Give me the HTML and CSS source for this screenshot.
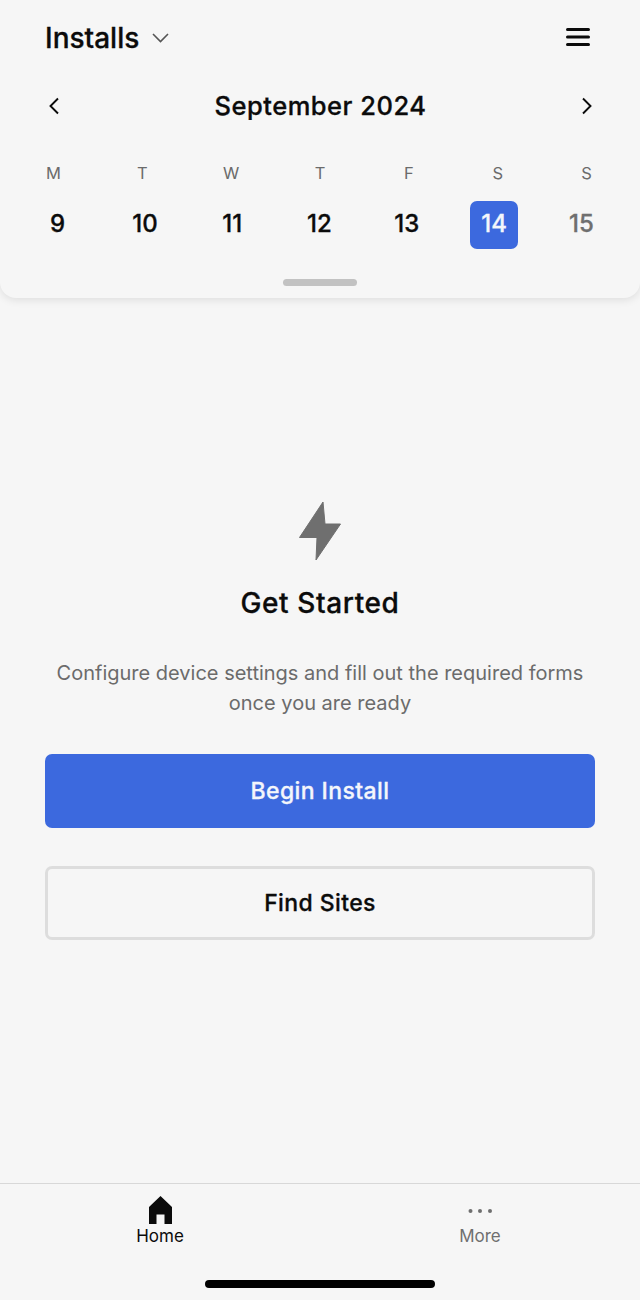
FILE: index.html
```html
<!DOCTYPE html>
<html lang="en">
<head>
<meta charset="utf-8">
<title>Installs</title>
<link rel="stylesheet" href="styles.css">
</head>
<body>
<div class="app">
  <header class="sheet">
    <div class="topbar">
      <div class="title-wrap">
        <span class="title strong">Installs</span>
        <svg class="chev" width="17" height="10" viewBox="0 0 17 10"><path d="M1 1 8.500 8.500 16 1" fill="none" stroke="#555" stroke-width="1.6"/></svg>
      </div>
      <svg class="burger" width="24" height="18" viewBox="0 0 24 18"><path d="M1.500 1.500h21M1.500 9h21M1.500 16.500h21" fill="none" stroke="#0b0b0b" stroke-width="3" stroke-linecap="round"/></svg>
    </div>
    <div class="month">
      <svg width="12" height="18" viewBox="0 0 12 18"><path d="M10 1.500 2.500 9l7.500 7.500" fill="none" stroke="#0b0b0b" stroke-width="1.900"/></svg>
      <span class="month-name strong">September 2024</span>
      <svg width="12" height="18" viewBox="0 0 12 18"><path d="M2 1.500 9.500 9 2 16.500" fill="none" stroke="#0b0b0b" stroke-width="1.900"/></svg>
    </div>
    <div class="weekdays">
      <span>M</span><span>T</span><span>W</span><span>T</span><span>F</span><span>S</span><span>S</span>
    </div>
    <div class="dates strong">
      <span class="date">9</span><span class="date">10</span><span class="date">11</span><span class="date">12</span><span class="date">13</span><span class="date selected">14</span><span class="date muted">15</span>
    </div>
    <div class="handle"></div>
  </header>

  <main class="content">
    <svg class="bolt" width="44" height="60" viewBox="0 0 44 60"><path d="M25 1 1.500 36.500H19L18 59 42.500 23H27L25 1Z" fill="#6f6f6f" stroke="#6f6f6f" stroke-width="1" stroke-linejoin="round"/></svg>
    <h1 class="heading strong">Get Started</h1>
    <p class="desc">Configure device settings and fill out the required forms<br>once you are ready</p>
    <button class="btn primary strong">Begin Install</button>
    <button class="btn secondary strong">Find Sites</button>
  </main>

  <nav class="tabs">
    <div class="tab active">
      <svg width="26" height="28" viewBox="0 0 26 28"><path d="M13.500 0 25 11V28H17.500V18.500H9.500V28H2V11L13.500 0Z" fill="#0b0b0b"/></svg>
      <span>Home</span>
    </div>
    <div class="tab">
      <svg width="26" height="28" viewBox="0 0 26 28"><circle cx="3.500" cy="15" r="2" fill="#6f6f6f"/><circle cx="13" cy="15" r="2" fill="#6f6f6f"/><circle cx="23" cy="15" r="2" fill="#6f6f6f"/></svg>
      <span>More</span>
    </div>
    <div class="home-bar"></div>
  </nav>
</div>
</body>
</html>
```
FILE: styles.css
```css
* { box-sizing: border-box; }
html, body { margin: 0; padding: 0; }
body {
  font-family: Inter, "Liberation Sans", sans-serif;
  background: #f6f6f6;
  color: #0b0b0b;
}
.strong { -webkit-text-stroke: 0.3px currentColor; }
.app {
  width: 640px;
  height: 1300px;
  display: flex;
  flex-direction: column;
  overflow: hidden;
}
.sheet {
  height: 298px;
  flex: none;
  background: #f6f6f6;
  border-radius: 0 0 16px 16px;
  box-shadow: 0 2px 8px rgba(0, 0, 0, 0.10);
  display: flex;
  flex-direction: column;
  padding-top: 19px;
}
.topbar {
  height: 36px;
  padding: 0 50px 0 45px;
  display: flex;
  align-items: center;
  justify-content: space-between;
}
.title-wrap { display: flex; align-items: center; gap: 13px; }
.title { padding-top: 2px; font-size: 28px; font-weight: 500; letter-spacing: 0; }
.chev { margin-top: 2px; }
.month {
  margin-top: 33px;
  height: 36px;
  padding: 0 47px 0 48px;
  display: flex;
  align-items: center;
  justify-content: space-between;
}
.month-name { padding-bottom: 2px; font-size: 25.500px; font-weight: 500; letter-spacing: 0.5px; }
.weekdays {
  margin-top: 39px;
  padding: 0 9px;
  display: grid;
  grid-template-columns: repeat(7, 1fr);
  height: 20px;
  line-height: 20px;
  font-size: 16.500px;
  color: #6b6b6b;
  text-align: center;
}
.dates {
  margin-top: 18px;
  padding: 0 15px 0 14px;
  display: grid;
  grid-template-columns: repeat(7, 1fr);
  justify-items: center;
  font-size: 24px;
  font-weight: 500;
}
.date {
  width: 48px;
  height: 48px;
  padding-bottom: 3px;
  display: flex;
  align-items: center;
  justify-content: center;
}
.selected { background: #3c69de; color: #f4f6fb; border-radius: 7px; }
.muted { color: #6f6f6f; }
.handle {
  width: 74px;
  height: 7px;
  margin: 30px auto 0;
  border-radius: 4px;
  background: #c2c2c2;
}
.content {
  flex: 1;
  padding: 203px 45px 0;
  display: flex;
  flex-direction: column;
  align-items: center;
}
.heading { margin: 23px 0 0; font-size: 28px; line-height: 38px; font-weight: 500; letter-spacing: 0.6px; }
.desc {
  margin: 36px 0 0;
  font-size: 20px;
  line-height: 30px;
  color: #6b6b6b;
  text-align: center;
  white-space: nowrap;
}
.btn {
  width: 100%;
  height: 74px;
  font: 500 23px Inter, "Liberation Sans", sans-serif;
  letter-spacing: 0.4px;
  border-radius: 7px;
  flex: none;
}
.primary {
  margin-top: 36px;
  background: #3c69de;
  color: #f4f6fb;
  border: 0;
}
.secondary {
  margin-top: 38px;
  background: transparent;
  color: #0b0b0b;
  border: 3px solid #dddddd;
}
.tabs {
  height: 117px;
  flex: none;
  border-top: 1px solid #d8d8d8;
  position: relative;
  display: grid;
  grid-template-columns: 1fr 1fr;
  padding-top: 12px;
}
.tab {
  display: flex;
  flex-direction: column;
  align-items: center;
  font-size: 17px;
  line-height: 22px;
  color: #6f6f6f;
  gap: 1px;
}
.tab.active { color: #0b0b0b; }
.home-bar {
  position: absolute;
  left: 205px;
  bottom: 12px;
  width: 230px;
  height: 8px;
  border-radius: 4px;
  background: #000;
}
```
